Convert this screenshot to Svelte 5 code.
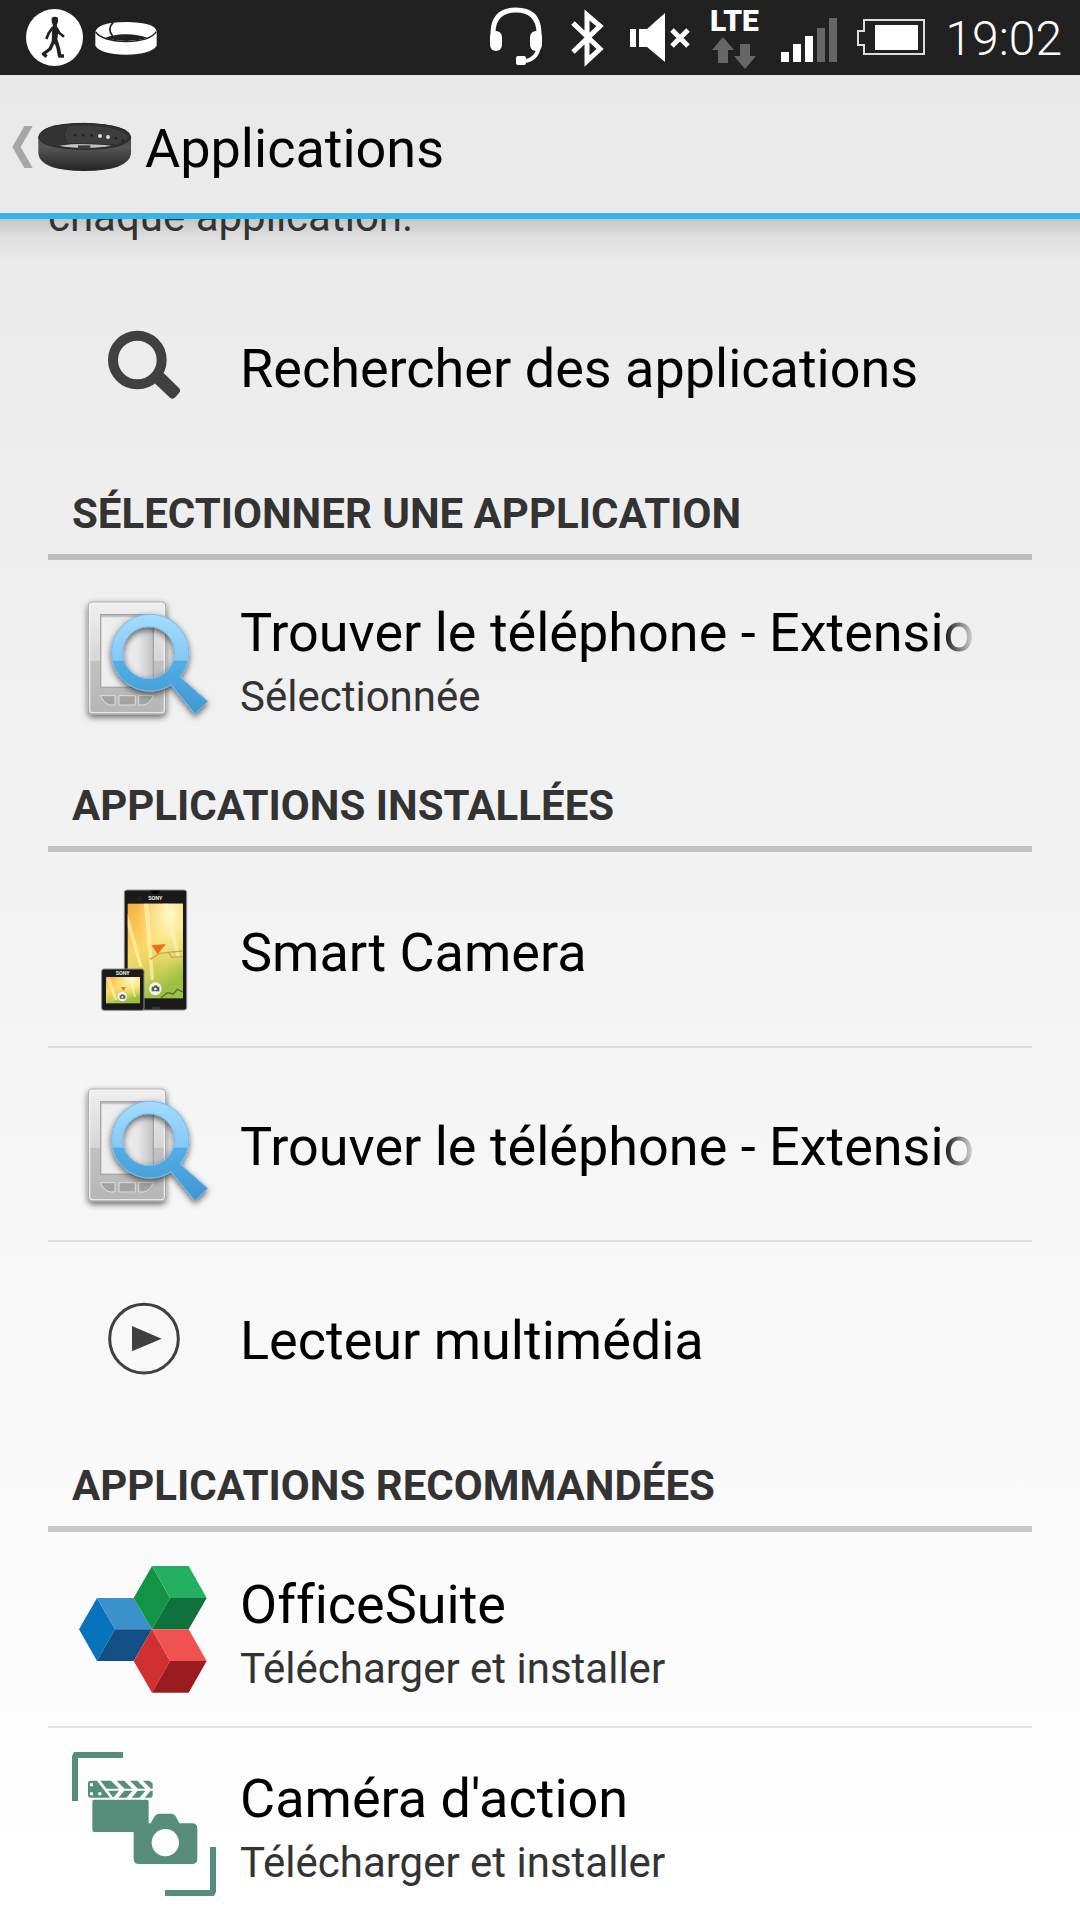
<script>
  const sections = [
    {
      heading: null,
      rows: [{ icon: 'search', title: 'Rechercher des applications' }]
    },
    {
      heading: 'Sélectionner une application',
      rows: [
        {
          icon: 'find',
          title: 'Trouver le téléphone - Extension intelligente',
          note: 'Sélectionnée'
        }
      ]
    },
    {
      heading: 'Applications installées',
      rows: [
        { icon: 'camera', title: 'Smart Camera' },
        { icon: 'find', title: 'Trouver le téléphone - Extension intelligente' },
        { icon: 'play', title: 'Lecteur multimédia' }
      ]
    },
    {
      heading: 'Applications recommandées',
      rows: [
        { icon: 'office', title: 'OfficeSuite', note: 'Télécharger et installer' },
        { icon: 'action', title: "Caméra d'action", note: 'Télécharger et installer' }
      ]
    }
  ];
</script>

{#snippet searchIcon()}
  <svg class="icon" viewBox="96 -21 432 432" aria-hidden="true">
    <circle cx="292" cy="180" r="73" fill="none" stroke="#404040" stroke-width="30" />
    <path d="M344 250 L371 219 L417 264 Q424 272 417 279 L406 292 Q398 300 390 293 Z" fill="#404040" />
  </svg>
{/snippet}

{#snippet findIcon()}
  <svg class="icon" viewBox="36 15 432 432" aria-hidden="true">
    <defs>
      <linearGradient id="device" x1="0" y1="0" x2="0" y2="1">
        <stop offset="0" stop-color="#f0f0f0" />
        <stop offset=".52" stop-color="#d6d6d6" />
        <stop offset=".53" stop-color="#c2c2c2" />
        <stop offset="1" stop-color="#b6b6b6" />
      </linearGradient>
      <linearGradient id="panel" x1="0" y1="0" x2="1" y2="0">
        <stop offset="0" stop-color="#efefef" />
        <stop offset=".7" stop-color="#e9e9e9" />
        <stop offset="1" stop-color="#c0c0c0" />
      </linearGradient>
      <linearGradient id="lens" gradientUnits="userSpaceOnUse" x1="0" y1="103" x2="0" y2="403">
        <stop offset="0" stop-color="#a4dcff" />
        <stop offset=".46" stop-color="#84c9f4" />
        <stop offset=".465" stop-color="#53aee4" />
        <stop offset="1" stop-color="#3f97d0" />
      </linearGradient>
      <filter id="soft" x="-20%" y="-20%" width="150%" height="150%">
        <feDropShadow dx="0" dy="8" stdDeviation="10" flood-color="#000" flood-opacity=".6" />
      </filter>
    </defs>
    <g filter="url(#soft)">
      <rect x="85" y="66" width="232" height="336" rx="12" fill="url(#device)" stroke="#a9a9a9" stroke-width="3" />
      <rect x="89" y="70" width="224" height="328" rx="9" fill="none" stroke="#f4f4f4" stroke-width="4" opacity=".8" />
    </g>
    <rect x="122" y="104" width="158" height="218" fill="url(#panel)" stroke="#a6a6a6" stroke-width="4" />
    <path d="M124 108H278" stroke="#a0a0a0" stroke-width="8" opacity=".5" />
    <path d="M122 347H165V375H150Q131 370 122 347ZM177 347H226V375H177ZM236 347H280Q270 370 252 375H236Z" fill="#a3a3a3" stroke="#dedede" stroke-width="3" />
    <g filter="url(#soft)">
      <path fill-rule="evenodd" d="M268 103A115 115 0 0 1 360 291L443 364L405 402L333 314A115 115 0 1 1 268 103ZM266 140A77 77 0 1 0 266 296A77 77 0 1 0 266 140Z" fill="url(#lens)" stroke="#74bdec" stroke-width="3" />
    </g>
  </svg>
{/snippet}

{#snippet cameraIcon()}
  <svg class="icon" viewBox="36 21 432 432" aria-hidden="true">
    <defs>
      <linearGradient id="sunset" x1="0" y1="0" x2=".35" y2="1">
        <stop offset="0" stop-color="#f8b044" />
        <stop offset=".5" stop-color="#fbd865" />
        <stop offset=".8" stop-color="#d0d058" />
        <stop offset="1" stop-color="#9dc043" />
      </linearGradient>
      <radialGradient id="glow" cx=".75" cy=".1" r=".6">
        <stop offset="0" stop-color="#fffbd0" />
        <stop offset="1" stop-color="#fff3a0" stop-opacity="0" />
      </radialGradient>
    </defs>
    <rect x="193" y="60" width="187" height="360" rx="8" fill="#1a1a1a" stroke="#8c8c8c" stroke-width="3" />
    <path d="M272 62H302L294 72H280Z" fill="#000" />
    <circle cx="239" cy="85" r="5" fill="none" stroke="#3a3a3a" stroke-width="2" />
    <text x="286" y="91" class="brand" text-anchor="middle">SONY</text>
    <rect x="203" y="101" width="166" height="284" fill="url(#sunset)" />
    <rect x="203" y="101" width="166" height="284" fill="url(#glow)" />
    <path d="M203 130L248 290L238 290L203 170ZM252 101H266L282 330H272ZM310 101H324L360 260L350 262Z" fill="#fff6b8" opacity=".65" />
    <path d="M270 268L300 250L325 247L368 243M325 247L335 262L368 260" fill="none" stroke="#d9a04a" stroke-width="4" />
    <path d="M274 226L318 222L293 252Z" fill="#e8731a" />
    <path d="M302 384L322 368L340 372L352 358L369 366" fill="none" stroke="#5f6e30" stroke-width="4" />
    <circle cx="286" cy="356" r="19" fill="#f3f3f3" />
    <path d="M275 350H281L284 346H290L293 350H298V364H275Z" fill="#5a5a5a" />
    <circle cx="286" cy="357" r="4" fill="#f3f3f3" />
    <path d="M276 414H300" stroke="#555" stroke-width="3" />
    <rect x="125" y="297" width="127" height="124" rx="7" fill="#1a1a1a" stroke="#8c8c8c" stroke-width="3" />
    <text x="188" y="315" class="brand" text-anchor="middle">SONY</text>
    <rect x="138" y="321" width="102" height="79" fill="url(#sunset)" />
    <rect x="138" y="321" width="102" height="79" fill="url(#glow)" />
    <path d="M150 321L172 390L164 390L140 330ZM205 321H212L228 380H222Z" fill="#fff6b8" opacity=".6" />
    <path d="M183 352L198 351L190 362Z" fill="#e8731a" />
    <circle cx="187" cy="380" r="14" fill="#f3f3f3" />
    <path d="M179 376H183L185 373H190L192 376H196V386H179Z" fill="#5a5a5a" />
    <circle cx="187" cy="381" r="3" fill="#f3f3f3" />
  </svg>
{/snippet}

{#snippet playIcon()}
  <svg class="icon" viewBox="36 -42 432 432" aria-hidden="true">
    <circle cx="252" cy="176" r="103" fill="none" stroke="#404040" stroke-width="9" />
    <path d="M216 138L305 176L216 214Z" fill="#404040" />
  </svg>
{/snippet}

{#snippet officeIcon()}
  <svg class="icon" viewBox="36 51 432 432" aria-hidden="true">
    <path d="M57 268L111 174L165 268L111 363Z" fill="#0873bd" />
    <path d="M111 174H221L276 268H165Z" fill="#3b91cb" />
    <path d="M165 268H276L221 363H111Z" fill="#124f84" />
    <path d="M221 174L276 78L330 174L276 268Z" fill="#129447" />
    <path d="M276 78H386L440 174H330Z" fill="#25b061" />
    <path d="M330 174H440L386 268H276Z" fill="#0f713c" />
    <path d="M221 363L276 268L330 363L276 458Z" fill="#d03030" />
    <path d="M276 268H386L440 363H330Z" fill="#f05250" />
    <path d="M330 363H440L386 458H276Z" fill="#9b1c20" />
  </svg>
{/snippet}

{#snippet actionIcon()}
  <svg class="icon" viewBox="36 66 432 432" aria-hidden="true">
    <g fill="#568d7b">
      <path d="M36 213V78L42 66H189V84H54V213Z" />
      <path d="M468 351V486L462 498H315V480H450V351Z" />
      <rect x="97" y="209" width="169" height="97" rx="6" />
      <rect x="84" y="152" width="194" height="51" rx="8" />
      <path d="M236 280H272L284 259Q289 251 297 251H335Q343 251 347 259L358 280H396Q412 280 412 296V386Q412 402 396 402H237Q221 402 221 386V296Q221 280 236 280Z" />
    </g>
    <circle cx="316" cy="338" r="41" fill="#fefefe" />
    <g fill="none" stroke="#fefefe">
      <path d="M113 148L158 207" stroke-width="8" />
      <path d="M138 179H280" stroke-width="6" />
      <path d="M157 148L188 179L164 207M197 148L228 179L204 207M236 148L267 179L243 207" stroke-width="12" />
    </g>
    <path d="M268 152L280 152V162ZM90 160h9v9h-9ZM90 187h9v9h-9ZM115 187h9v9h-9Z" fill="#fefefe" />
  </svg>
{/snippet}

<div class="screen">
  <div class="status">
    <svg width="57" height="57" viewBox="78 27 171 171" aria-hidden="true">
      <circle cx="163.500" cy="112.500" r="85.500" fill="#fff" />
      <g fill="none" stroke="#212121" stroke-linejoin="round">
        <path d="M155 54Q165 47 174 54V66L169 78H160L155 66Z" fill="#212121" stroke="none" />
        <path d="M158 76H170L175 92L172 118L176 132H155L156 100Z" fill="#212121" stroke="none" />
        <path d="M159 82L146 100L139 117M170 84L177 98L192 110" stroke-width="8" />
        <path d="M161 124L150 147L130 162L140 170" stroke-width="10" />
        <path d="M168 124L175 145L179 168H192" stroke-width="11" />
      </g>
    </svg>
    <svg width="62" height="33" viewBox="286 66 186 99" aria-hidden="true">
      <path d="M287 100Q291 70 379 69Q466 70 471 97V140Q455 166 379 167Q303 166 287 140Z" fill="#fff" />
      <path d="M288 99Q306 125 379 128Q452 126 470 98" fill="none" stroke="#212121" stroke-width="4" />
      <path d="M316 117Q345 105 379 106Q415 106 444 117Q380 135 316 117Z" fill="#212121" />
      <path d="M341 70Q321 89 339 111" fill="none" stroke="#212121" stroke-width="5" />
    </svg>
    <div class="indicators">
      <svg width="61" height="75" viewBox="491 0 61 75" aria-hidden="true">
        <path d="M494 38V32Q495 10 517 10Q539 10 540 32V38" fill="none" stroke="#fff" stroke-width="5" />
        <rect x="491" y="31" width="12" height="20" rx="6" fill="#fff" />
        <rect x="531" y="31" width="12" height="20" rx="6" fill="#fff" />
        <path d="M540 46Q538 60 525 61" fill="none" stroke="#fff" stroke-width="4" />
        <rect x="517" y="56" width="10" height="9" rx="2" fill="#fff" />
      </svg>
      <svg width="39" height="75" viewBox="572 0 39 75" aria-hidden="true">
        <path d="M574 23L601 49L588 61V15L601 26L574 52" fill="none" stroke="#fff" stroke-width="5" />
      </svg>
      <svg width="59" height="75" viewBox="631 0 59 75" aria-hidden="true">
        <path d="M631 29H637V47H631ZM640 29H648L666 13V62L648 47H640Z" fill="#fff" />
        <path d="M673 30L689 46M689 30L673 46" stroke="#fff" stroke-width="5" />
      </svg>
      <div class="network">
        <span>LTE</span>
        <svg width="44" height="32" viewBox="712 36 44 32" aria-hidden="true">
          <path d="M723 36L734 49H728V62H718V49H712ZM740 43H750V55H756L745 68L734 55H740Z" fill="#666" />
        </svg>
      </div>
      <svg width="56" height="75" viewBox="782 0 56 75" aria-hidden="true">
        <path d="M782 52h8v10h-8ZM794 44h8v18h-8ZM806 36h8v26h-8Z" fill="#fff" />
        <path d="M818 28h8v34h-8ZM830 18h8v44h-8Z" fill="#666" />
      </svg>
      <svg width="68" height="75" viewBox="858 0 68 75" aria-hidden="true">
        <path d="M865 20H925V54H865V45H859V31H865Z" fill="none" stroke="#ddd" stroke-width="2" />
        <rect x="876" y="25" width="43" height="25" fill="#fff" />
      </svg>
      <time>19:02</time>
    </div>
  </div>

  <header class="bar">
    <button class="home" type="button" aria-label="Retour">
      <svg width="21" height="42" viewBox="38 378 63 126" aria-hidden="true">
        <path d="M75 378H100L64 441L100 504H75L39 441Z" fill="#a6a6a6" />
      </svg>
      <svg width="93" height="48" viewBox="114 369 279 144" aria-hidden="true">
        <defs>
          <linearGradient id="strap" x1="0" y1="0" x2="0" y2="1">
            <stop offset="0" stop-color="#3a3a3a" />
            <stop offset=".5" stop-color="#555" />
            <stop offset="1" stop-color="#242424" />
          </linearGradient>
        </defs>
        <path d="M115 412Q118 372 253 370Q390 374 393 412V462Q385 512 253 513Q122 512 115 462Z" fill="url(#strap)" />
        <path d="M116 412Q122 371 253 370Q386 374 392 412Q380 447 253 448Q126 446 116 412Z" fill="#333" stroke="#262626" stroke-width="3" />
        <path d="M178 437Q250 426 334 437Q300 443 253 444Q205 443 178 437Z" fill="#c4c4c4" />
        <path d="M206 376Q182 405 203 430Q270 432 350 434Q378 428 386 412Q370 380 253 374Z" fill="#3d3d3d" stroke="#282828" stroke-width="2" />
        <path d="M234 436H271V447H234Z" fill="#3a3a3a" />
        <g fill="#222">
          <circle cx="225" cy="406" r="4" />
          <circle cx="250" cy="406" r="4" />
          <circle cx="275" cy="406" r="4" />
          <circle cx="348" cy="415" r="4" />
          <circle cx="369" cy="422" r="4" />
        </g>
        <circle cx="300" cy="408" r="6" fill="#ddd" />
        <circle cx="324" cy="411" r="6" fill="#ddd" />
      </svg>
    </button>
    <h1>Applications</h1>
  </header>

  <main>
    <p class="intro">chaque application.</p>
    {#each sections as section}
      <section>
        {#if section.heading}
          <h2>{section.heading}</h2>
        {/if}
        <ul>
          {#each section.rows as row}
            <li>
              <button class="row" type="button">
                {#if row.icon === 'search'}
                  {@render searchIcon()}
                {:else if row.icon === 'find'}
                  {@render findIcon()}
                {:else if row.icon === 'camera'}
                  {@render cameraIcon()}
                {:else if row.icon === 'play'}
                  {@render playIcon()}
                {:else if row.icon === 'office'}
                  {@render officeIcon()}
                {:else}
                  {@render actionIcon()}
                {/if}
                <span class="text">
                  <span class="title" class:long={row.title.length > 30}>{row.title}</span>
                  {#if row.note}
                    <span class="note">{row.note}</span>
                  {/if}
                </span>
              </button>
            </li>
          {/each}
        </ul>
      </section>
    {/each}
  </main>
</div>

<style>
  :global(body) {
    margin: 0;
  }

  .screen {
    min-height: 100vh;
    background: linear-gradient(#e8e8e8, #fff);
    color: #000;
    font-family: Roboto, 'Liberation Sans', sans-serif;
    font-variant-ligatures: none;
  }

  svg {
    display: block;
    flex: none;
    overflow: visible;
  }

  .brand {
    fill: #eee;
    font-size: 16px;
    font-weight: 700;
  }

  .status {
    display: flex;
    align-items: center;
    gap: 12px;
    height: 75px;
    padding: 0 18px 0 26px;
    background: #212121;
    color: #fff;
  }

  .indicators {
    display: flex;
    align-items: center;
    gap: 20px;
    margin-left: auto;
  }

  .network {
    display: flex;
    flex-direction: column;
    align-items: center;
    gap: 2px;
    width: 50px;
    padding-right: 2px;
    font-size: 30px;
    font-weight: 900;
    line-height: 28px;
  }

  time {
    padding-top: 2px;
    font-size: 48px;
    line-height: 56px;
    font-weight: 300;
  }

  .bar {
    display: flex;
    align-items: center;
    gap: 14px;
    box-sizing: border-box;
    height: 144px;
    border-bottom: 6px solid #33b5e5;
    padding: 6px 12px 0;
  }

  button {
    margin: 0;
    border: 0;
    padding: 0;
    background: none;
    color: inherit;
    font: inherit;
    text-align: left;
  }

  .home {
    display: flex;
    align-items: center;
    gap: 5px;
  }

  h1 {
    margin: 0;
    padding-top: 4px;
    font-size: 54px;
    line-height: 72px;
    font-weight: 400;
  }

  main {
    overflow: hidden;
    padding: 0 48px;
    background: linear-gradient(rgba(0, 0, 0, 0.16), rgba(0, 0, 0, 0.06) 16px, transparent 44px);
  }

  .intro {
    margin: -27px 0 26px;
    color: #333;
    font-size: 42px;
    line-height: 50px;
  }

  h2 {
    box-sizing: border-box;
    margin: 0;
    border-bottom: 6px solid rgba(0, 0, 0, 0.2);
    padding: 27px 24px 15px;
    color: #333;
    font-size: 42px;
    line-height: 50px;
    font-weight: 700;
    text-transform: uppercase;
  }

  ul {
    margin: 0;
    padding: 0;
    list-style: none;
  }

  .row {
    display: flex;
    align-items: center;
    gap: 24px;
    box-sizing: border-box;
    width: 100%;
    min-height: 194px;
    padding: 0 55px 0 24px;
  }

  li + li .row {
    border-top: 2px solid rgba(0, 0, 0, 0.1);
  }

  .icon {
    width: 144px;
    height: 144px;
  }

  .text {
    display: flex;
    flex: 1;
    flex-direction: column;
    min-width: 0;
    padding-top: 8px;
  }

  li + li .text {
    padding-top: 6px;
  }

  .title {
    overflow: hidden;
    font-size: 54px;
    line-height: 72px;
    white-space: nowrap;
  }

  .title.long {
    mask-image: linear-gradient(to left, transparent, #000 36px);
  }

  .note {
    color: #333;
    font-size: 42px;
    line-height: 56px;
  }
</style>
